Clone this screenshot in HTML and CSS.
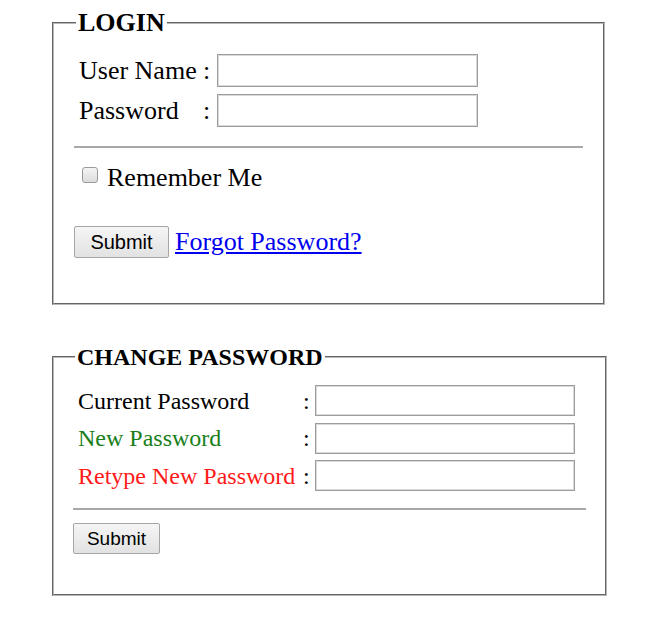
FILE: index.html
```html
<!DOCTYPE html>
<html>
<head>
<meta charset="utf-8">
<link rel="stylesheet" href="styles.css">
</head>
<body>
<div class="page">
  <fieldset class="box login">
    <legend>LOGIN</legend>
    <div class="rows">
      <label class="lbl" for="u">User Name</label><span class="colon">:</span><input id="u" class="field" type="text">
      <label class="lbl" for="p">Password</label><span class="colon">:</span><input id="p" class="field" type="password">
    </div>
    <hr class="sep">
    <label class="remember"><input type="checkbox" class="check"> Remember Me</label>
    <div class="actions">
      <button class="btn" type="button">Submit</button>
      <a href="#" class="link">Forgot Password?</a>
    </div>
  </fieldset>

  <fieldset class="box change">
    <legend>CHANGE PASSWORD</legend>
    <div class="rows">
      <label class="lbl" for="c1">Current Password</label><span class="colon">:</span><input id="c1" class="field" type="password">
      <label class="lbl green" for="c2">New Password</label><span class="colon">:</span><input id="c2" class="field" type="password">
      <label class="lbl red" for="c3">Retype New Password</label><span class="colon">:</span><input id="c3" class="field" type="password">
    </div>
    <hr class="sep">
    <div class="actions">
      <button class="btn" type="button">Submit</button>
    </div>
  </fieldset>
</div>
</body>
</html>
```

FILE: styles.css
```css
html, body {
  margin: 0;
  padding: 0;
  background: #ffffff;
}

.page {
  padding: 8px 0 0 52px;
  font-family: "Liberation Serif", "Times New Roman", serif;
  color: #000;
}

.box {
  margin: 0;
  border: 2px groove #b8b8b8;
  min-width: 0;
}

.box legend {
  font-weight: bold;
  padding: 0 2px;
  margin-left: 2px;
}

.login {
  width: 509px;
  padding: 16px 20px 45px 20px;
  font-size: 26px;
}

.login legend {
  font-size: 26px;
  line-height: 30px;
}

.change {
  width: 513px;
  margin-top: 38px;
  padding: 14px 19px 40px 19px;
  font-size: 24px;
}

.change legend {
  font-size: 24px;
  line-height: 28px;
}

.rows {
  display: grid;
  align-items: center;
}

.login .rows {
  grid-template-columns: 120px 10px 261px;
  column-gap: 4px;
  row-gap: 7px;
  padding-left: 5px;
}

.change .rows {
  grid-template-columns: 221px 8px 260px;
  column-gap: 4px;
  row-gap: 6.5px;
  padding-left: 5px;
}

.lbl {
  white-space: nowrap;
  line-height: 1;
}

.colon {
  line-height: 1;
}

.green { color: #1a7f1a; }
.red { color: #ff1a1a; }

.field {
  box-sizing: border-box;
  margin: 0;
  border: 1px solid #9c9c9c;
  box-shadow: inset 0 0 0 1px #d9d9d9;
  background: #fff;
  padding: 0;
}

.login .field { height: 33px; }
.change .field { height: 31px; }

.sep {
  border: 0;
  border-top: 2px solid #a8a8a8;
  height: 0;
}

.login .sep { margin: 19px 0 0 0; }
.change .sep { margin: 17px 0 0 0; }

.remember {
  display: flex;
  align-items: center;
  gap: 9px;
  margin-top: 15px;
  padding-left: 8px;
  line-height: 30px;
}

.check {
  appearance: none;
  -webkit-appearance: none;
  width: 16px;
  height: 16px;
  margin: 0;
  border: 1px solid #9a9a9a;
  border-radius: 3px;
  background: linear-gradient(#f4f4f4, #dcdcdc);
  position: relative;
  top: -3px;
}

.actions {
  display: flex;
  align-items: center;
  gap: 6px;
}

.login .actions { margin-top: 33px; }
.change .actions { margin-top: 13px; }

.btn {
  font-family: "Liberation Sans", Arial, sans-serif;
  color: #000;
  margin: 0;
  padding: 0;
  border: 1px solid #a6a6a6;
  border-radius: 2px;
  background: linear-gradient(#f5f5f5, #e2e2e2);
}

.login .btn {
  width: 95px;
  height: 32px;
  font-size: 20px;
}

.change .btn {
  width: 87px;
  height: 31px;
  font-size: 19px;
}

.link {
  color: #0000ee;
  text-decoration: underline;
  font-size: 26px;
}
```
